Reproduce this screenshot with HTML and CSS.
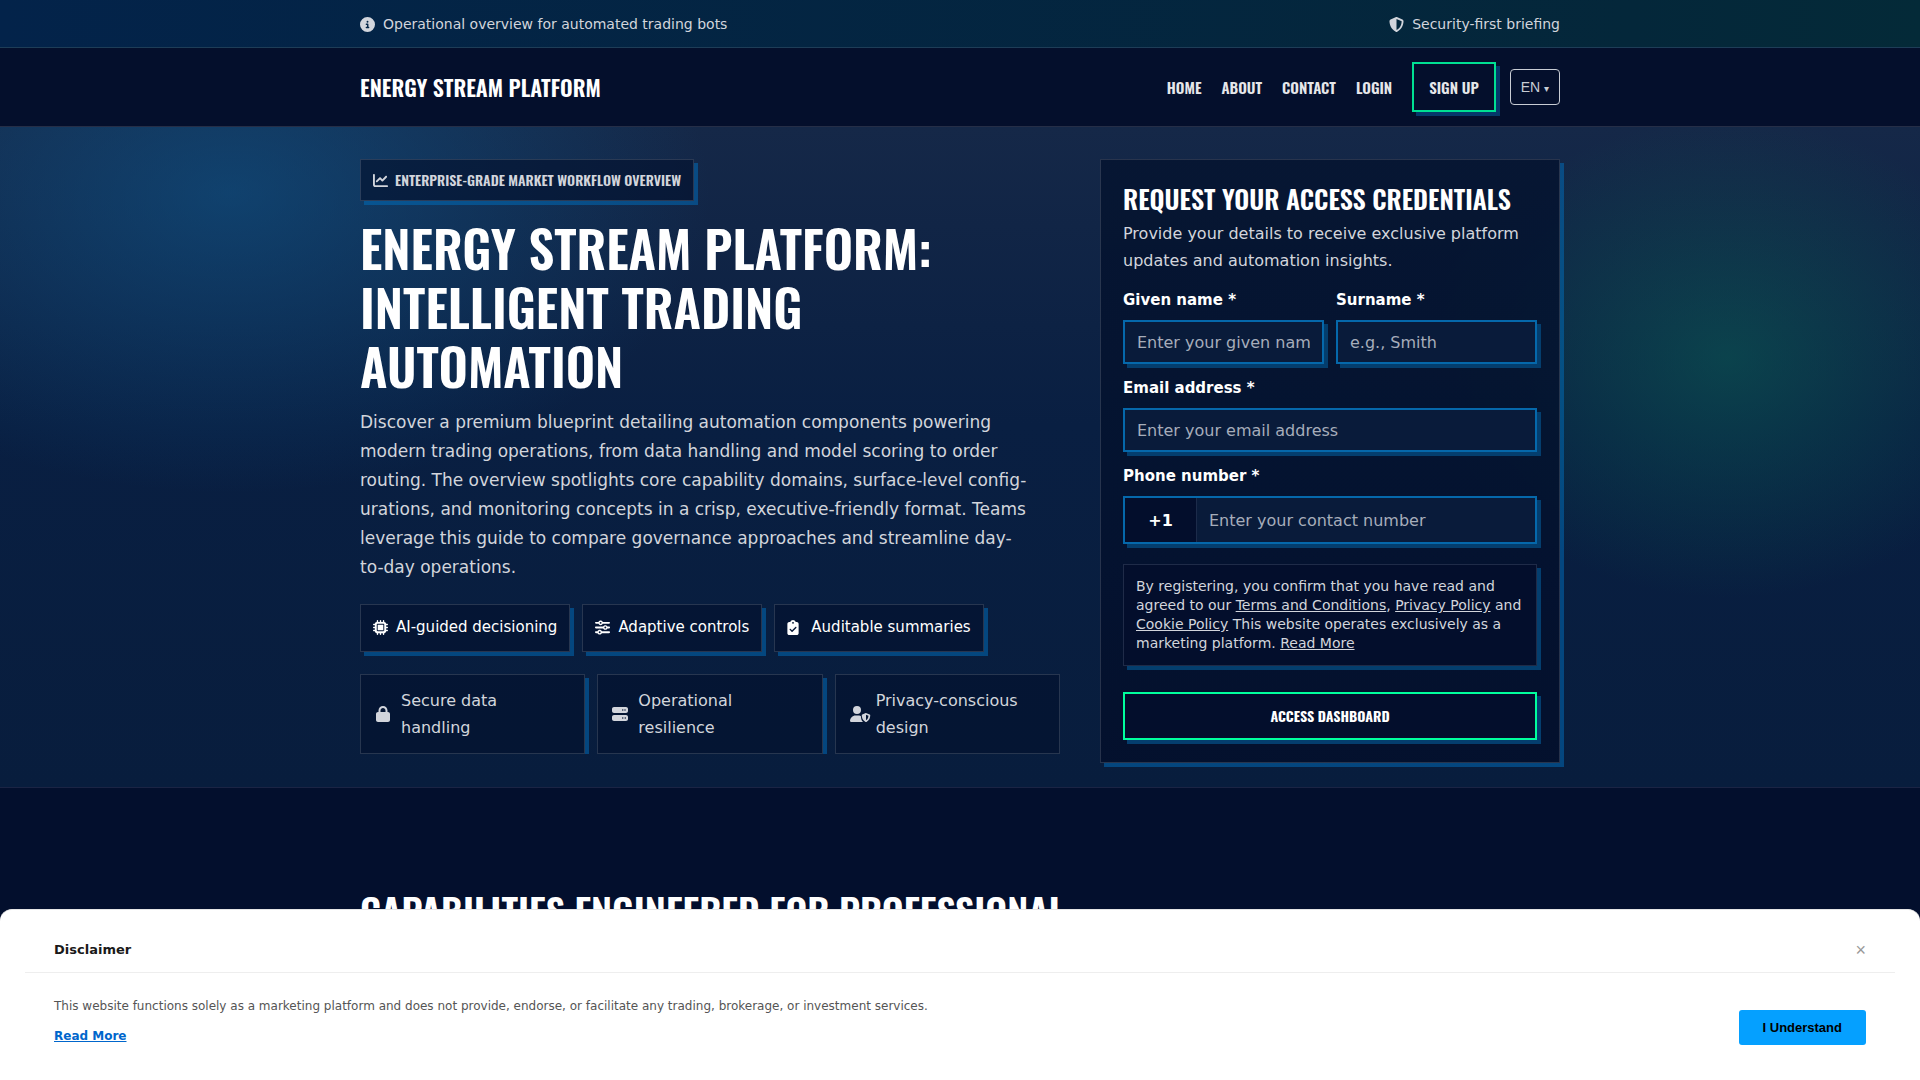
FILE: index.html
```html
<!DOCTYPE html>
<html lang="en">
<head>
    <meta charset="UTF-8">
    <meta name="viewport" content="width=device-width, initial-scale=1.0">
    <title>Energy Stream Platform</title>
    <link rel="stylesheet" href="styles.css">
</head>
<body>
    <div class="topbar">
        <div class="container topbar-inner">
            <span class="topbar-item">
                <svg class="icon" viewBox="0 0 512 512" aria-hidden="true"><path d="M256 512A256 256 0 1 0 256 0a256 256 0 1 0 0 512zM216 336h24V272H216c-13 0-24-11-24-24s11-24 24-24h48c13 0 24 11 24 24v88h8c13 0 24 11 24 24s-11 24-24 24H216c-13 0-24-11-24-24s11-24 24-24zm40-208a32 32 0 1 1 0 64 32 32 0 1 1 0-64z"/></svg>
                Operational overview for automated trading bots
            </span>
            <span class="topbar-item">
                <svg class="icon" viewBox="0 0 512 512" aria-hidden="true"><path d="M256 0c4.600 0 9.200 1 13.400 2.900L457.700 82.800c22 9.300 38.400 31 38.300 57.200c-.5 99.200-41.300 280.700-213.600 363.200c-16.700 8-36.100 8-52.800 0C57.300 420.700 16.500 239.200 16 140c-.1-26.200 16.300-47.900 38.300-57.200L242.700 2.900C246.800 1 251.400 0 256 0zm0 66.800V444.800C394 378 431.100 230.100 432 141.400L256 66.800z"/></svg>
                Security-first briefing
            </span>
        </div>
    </div>

    <header class="header">
        <div class="container header-inner">
            <a class="brand" href="#">Energy Stream Platform</a>
            <nav class="nav">
                <a href="#">Home</a>
                <a href="#">About</a>
                <a href="#">Contact</a>
                <a href="#">Login</a>
                <a class="nav-cta" href="#signup">Sign up</a>
                <button class="lang" type="button">EN <span class="lang-arrow">▾</span></button>
            </nav>
        </div>
    </header>

    <main>
        <section class="hero">
            <div class="container hero-grid">
                <div class="hero-copy">
                    <div class="badge">
                        <svg class="icon" viewBox="0 0 512 512" aria-hidden="true"><path d="M64 64c0-17.700-14.300-32-32-32S0 46.300 0 64V400c0 44.200 35.800 80 80 80H480c17.700 0 32-14.300 32-32s-14.300-32-32-32H80c-8.800 0-16-7.200-16-16V64zm406.600 86.600c12.500-12.500 12.500-32.800 0-45.300s-32.800-12.500-45.300 0L320 210.700l-57.400-57.400c-12.500-12.500-32.800-12.500-45.300 0l-112 112c-12.500 12.500-12.500 32.800 0 45.300s32.800 12.500 45.300 0L240 221.300l57.400 57.400c12.500 12.500 32.800 12.500 45.300 0l128-128z"/></svg>
                        Enterprise-grade market workflow overview
                    </div>
                    <h1>Energy Stream Platform: Intelligent Trading Automation</h1>
                    <p class="lead">Discover a premium blueprint detailing automation components powering modern trading operations, from data handling and model scoring to order routing. The overview spotlights core capability domains, surface-level config&shy;urations, and monitoring concepts in a crisp, executive-friendly format. Teams leverage this guide to compare governance approaches and streamline day-to-day operations.</p>

                    <div class="chips">
                        <div class="chip">
                            <svg class="icon" viewBox="0 0 512 512" aria-hidden="true"><path fill-rule="evenodd" d="M176 24c0-13.300-10.700-24-24-24s-24 10.700-24 24v40c-35.300 0-64 28.700-64 64H24c-13.300 0-24 10.700-24 24s10.700 24 24 24h40v56H24c-13.300 0-24 10.700-24 24s10.700 24 24 24h40v56H24c-13.300 0-24 10.700-24 24s10.700 24 24 24h40c0 35.300 28.700 64 64 64v40c0 13.300 10.700 24 24 24s24-10.700 24-24v-40h56v40c0 13.300 10.700 24 24 24s24-10.700 24-24v-40h56v40c0 13.300 10.700 24 24 24s24-10.700 24-24v-40c35.300 0 64-28.700 64-64h40c13.300 0 24-10.700 24-24s-10.700-24-24-24h-40v-56h40c13.300 0 24-10.700 24-24s-10.700-24-24-24h-40v-56h40c13.300 0 24-10.700 24-24s-10.700-24-24-24h-40c0-35.300-28.700-64-64-64V24c0-13.300-10.700-24-24-24s-24 10.700-24 24v40h-56V24c0-13.300-10.700-24-24-24s-24 10.700-24 24v40h-56V24zM160 128H352c17.700 0 32 14.300 32 32V352c0 17.700-14.300 32-32 32H160c-17.700 0-32-14.300-32-32V160c0-17.700 14.300-32 32-32zm192 32H160V352H352V160z"/></svg>
                            AI-guided decisioning
                        </div>
                        <div class="chip">
                            <svg class="icon" viewBox="0 0 512 512" aria-hidden="true"><path d="M0 416c0 17.700 14.300 32 32 32h54.700c12.300 28.300 40.500 48 73.300 48s61-19.700 73.300-48H480c17.700 0 32-14.300 32-32s-14.300-32-32-32H233.300c-12.300-28.300-40.500-48-73.300-48s-61 19.700-73.300 48H32c-17.700 0-32 14.300-32 32zm128 0a32 32 0 1 1 64 0 32 32 0 1 1-64 0zM320 256a32 32 0 1 1 64 0 32 32 0 1 1-64 0zm32-80c-32.800 0-61 19.700-73.300 48H32c-17.700 0-32 14.300-32 32s14.300 32 32 32h246.700c12.300 28.300 40.500 48 73.300 48s61-19.700 73.300-48H480c17.700 0 32-14.300 32-32s-14.300-32-32-32h-54.700c-12.300-28.300-40.500-48-73.300-48zM192 128a32 32 0 1 1 0-64 32 32 0 1 1 0 64zm73.300-64C253 35.700 224.800 16 192 16s-61 19.700-73.300 48H32C14.300 64 0 78.300 0 96s14.300 32 32 32h86.700c12.300 28.300 40.500 48 73.300 48s61-19.700 73.300-48H480c17.700 0 32-14.300 32-32s-14.300-32-32-32H265.300z"/></svg>
                            Adaptive controls
                        </div>
                        <div class="chip">
                            <svg class="icon icon-narrow" viewBox="0 0 384 512" aria-hidden="true"><path d="M192 0c-41.800 0-77.400 26.700-90.500 64H64C28.700 64 0 92.700 0 128V448c0 35.300 28.700 64 64 64H320c35.300 0 64-28.700 64-64V128c0-35.300-28.700-64-64-64H282.500C269.400 26.700 233.800 0 192 0zm0 64a32 32 0 1 1 0 64 32 32 0 1 1 0-64zM305 273L177 401c-9.400 9.400-24.600 9.400-33.900 0L79 337c-9.400-9.400-9.400-24.600 0-33.900s24.600-9.400 33.900 0l47 47L271 239c9.400-9.400 24.600-9.400 33.900 0s9.400 24.600 0 33.900z"/></svg>
                            Auditable summaries
                        </div>
                    </div>

                    <div class="assurances">
                        <div class="assurance">
                            <svg class="icon-fixed" viewBox="-32 0 512 512" aria-hidden="true"><path d="M144 144v48H304V144c0-44.200-35.800-80-80-80s-80 35.800-80 80zM80 192V144C80 64.500 144.500 0 224 0s144 64.500 144 144v48h16c35.300 0 64 28.700 64 64V448c0 35.300-28.700 64-64 64H64c-35.300 0-64-28.700-64-64V256c0-35.300 28.700-64 64-64H80z"/></svg>
                            <span>Secure data handling</span>
                        </div>
                        <div class="assurance">
                            <svg class="icon-fixed" viewBox="0 0 512 512" aria-hidden="true"><path d="M64 32C28.700 32 0 60.700 0 96v64c0 35.300 28.700 64 64 64H448c35.300 0 64-28.700 64-64V96c0-35.300-28.700-64-64-64H64zm280 72a24 24 0 1 1 0 48 24 24 0 1 1 0-48zm48 24a24 24 0 1 1 48 0 24 24 0 1 1-48 0zM64 288c-35.300 0-64 28.700-64 64v64c0 35.300 28.700 64 64 64H448c35.300 0 64-28.700 64-64V352c0-35.300-28.700-64-64-64H64zm280 72a24 24 0 1 1 0 48 24 24 0 1 1 0-48zm56 24a24 24 0 1 1 48 0 24 24 0 1 1-48 0z"/></svg>
                            <span>Operational resilience</span>
                        </div>
                        <div class="assurance">
                            <svg class="icon-fixed" viewBox="0 0 512 512" aria-hidden="true"><path d="M224 256A128 128 0 1 0 224 0a128 128 0 1 0 0 256zM178.300 304C79.800 304 0 383.800 0 482.300C0 498.700 13.300 512 29.700 512H418.300c1.800 0 3.500-.2 5.300-.5C378 480 352 422 349 325c-16-14-35-21-55-21H178.300zM512 224c-3 0-6 .6-8 1.500l-110 44c-11 4.400-18 15-18 26.500c0 76 30 166 121 214c9 4 21 4 30 0c91-48 121-138 121-214c0-11.500-7-22-18-26.500l-120-44c-2-.9-5-1.500-8-1.500zm0 56l78 31c-4 60-27 117-78 147V280z"/></svg>
                            <span>Privacy-conscious design</span>
                        </div>
                    </div>
                </div>

                <form class="card" id="signup">
                    <h2>Request your access credentials</h2>
                    <p class="card-text">Provide your details to receive exclusive platform updates and automation insights.</p>
                    <div class="fields">
                        <div class="field">
                            <label for="first-name">Given name *</label>
                            <input id="first-name" type="text" placeholder="Enter your given name">
                        </div>
                        <div class="field">
                            <label for="last-name">Surname *</label>
                            <input id="last-name" type="text" placeholder="e.g., Smith">
                        </div>
                        <div class="field field-wide">
                            <label for="email">Email address *</label>
                            <input id="email" type="email" placeholder="Enter your email address">
                        </div>
                        <div class="field field-wide">
                            <label for="phone">Phone number *</label>
                            <div class="phone">
                                <span class="phone-code">+1</span>
                                <input id="phone" type="tel" placeholder="Enter your contact number">
                            </div>
                        </div>
                    </div>
                    <p class="consent">By registering, you confirm that you have read and agreed to our <a href="#">Terms and Conditions</a>, <a href="#">Privacy Policy</a> and <a href="#">Cookie Policy</a> This website operates exclusively as a marketing platform. <a href="#">Read More</a></p>
                    <button class="submit" type="submit">Access dashboard</button>
                </form>
            </div>
        </section>

        <section class="capabilities">
            <div class="container">
                <h2>Capabilities engineered for professional</h2>
            </div>
        </section>
    </main>

    <div class="disclaimer" id="disclaimer">
        <div class="disclaimer-head">
            <strong>Disclaimer</strong>
            <button class="close" type="button" aria-label="Close">×</button>
        </div>
        <div class="disclaimer-body">
            <div>
                <p>This website functions solely as a marketing platform and does not provide, endorse, or facilitate any trading, brokerage, or investment services.</p>
                <a href="#">Read More</a>
            </div>
            <button class="accept" type="button">I Understand</button>
        </div>
    </div>

    <script>
        const disclaimer = document.getElementById('disclaimer');
        function hideDisclaimer() {
            disclaimer.hidden = true;
        }
        disclaimer.querySelector('.close').addEventListener('click', hideDisclaimer);
        disclaimer.querySelector('.accept').addEventListener('click', hideDisclaimer);
    </script>
</body>
</html>
```

FILE: styles.css
```css
:root {
    --navy: #030f2d;
    --text: #ffffff;
    --muted: #d2d5dc;
    --line: rgba(255, 255, 255, 0.14);
    --panel: rgba(3, 17, 46, 0.65);
    --blue: #0568ab;
    --green: #00ff9d;
    --shadow: 4px 4px 0 rgba(0, 112, 192, 0.5);
    --heading: Oswald, "Liberation Sans Narrow", "DejaVu Sans Condensed", sans-serif;
    --body: "DejaVu Sans", sans-serif;
}
* {
    box-sizing: border-box;
}
body {
    margin: 0;
    background: var(--navy);
    color: var(--text);
    font-family: var(--body);
    font-size: 16px;
    line-height: 27px;
}
h1, h2, p {
    margin: 0;
}
a {
    color: inherit;
    text-decoration: none;
}
button {
    cursor: pointer;
}
.container {
    max-width: 1200px;
    margin: 0 auto;
}
.icon {
    width: 15px;
    height: 15px;
    flex: none;
    fill: currentColor;
}
.icon-narrow {
    width: 12px;
    margin-right: 4px;
}
.icon-fixed {
    width: 16px;
    height: 16px;
    flex: none;
    fill: currentColor;
    overflow: visible;
}

/* top bar and header */
.topbar {
    background: linear-gradient(90deg, #03234a, #04273a 85%, #042a38);
    border-bottom: 1px solid #1e3d57;
    color: var(--muted);
    font-size: 14px;
    line-height: 26px;
}
.topbar-inner {
    display: flex;
    justify-content: space-between;
    padding: 11px 0 10px;
}
.topbar-item {
    display: flex;
    align-items: center;
    gap: 8px;
}
.header {
    background: #040f2c;
    border-bottom: 1px solid #252e47;
}
.header-inner {
    display: flex;
    justify-content: space-between;
    align-items: center;
    padding: 14px 0;
}
.brand {
    font-family: var(--heading);
    font-size: 22px;
    font-weight: 600;
    text-transform: uppercase;
}
.nav {
    display: flex;
    align-items: center;
    gap: 20px;
    color: #e6e7ea;
    font-family: var(--heading);
    font-size: 15px;
    font-weight: 600;
    text-transform: uppercase;
}
.nav-cta {
    padding: 10px 15px;
    line-height: 26px;
    border: 2px solid #00e092;
    box-shadow: 4px 4px 0 #05386a;
}
.lang {
    height: 36px;
    padding: 0 10px;
    margin-left: -6px;
    background: transparent;
    border: 1px solid #c8ccd4;
    border-radius: 4px;
    color: #c8ccd4;
    font-family: "Liberation Sans", sans-serif;
    font-size: 14px;
}
.lang-arrow {
    font-size: 10px;
}

/* hero */
.hero {
    padding: 32px 0 24px;
    border-bottom: 1px solid #1b2444;
    background:
        radial-gradient(480px 300px at 12% 10%, rgba(14, 88, 142, 0.55), transparent),
        radial-gradient(300px 240px at 90% 35%, rgba(10, 100, 86, 0.5), transparent),
        linear-gradient(180deg, #152848, #091f42 45%, #081d3d);
}
.hero-grid {
    display: grid;
    grid-template-columns: minmax(0, 1fr) 460px;
    gap: 40px;
    align-items: start;
}
.badge {
    display: inline-flex;
    align-items: center;
    gap: 7px;
    padding: 8px 12px;
    background: var(--panel);
    border: 1px solid var(--line);
    box-shadow: var(--shadow);
    color: var(--muted);
    font-family: var(--heading);
    font-size: 14px;
    font-weight: 600;
    line-height: 24px;
    text-transform: uppercase;
    vertical-align: top;
}
h1 {
    margin: 17px 0 13px;
    font-family: var(--heading);
    font-size: 51px;
    font-weight: 600;
    line-height: 59px;
    text-transform: uppercase;
}
.lead {
    max-width: 672px;
    color: var(--muted);
    font-size: 17px;
    line-height: 29px;
}
.chips {
    display: flex;
    flex-wrap: wrap;
    gap: 12px;
    margin: 22px 0;
}
.chip {
    display: flex;
    align-items: center;
    gap: 8px;
    padding: 9px 12px 11px;
    background: var(--panel);
    border: 1px solid var(--line);
    box-shadow: var(--shadow);
    font-size: 15px;
    line-height: 26px;
}
.assurances {
    display: grid;
    grid-template-columns: repeat(3, 1fr);
    gap: 12px;
    overflow: hidden;
}
.assurance {
    display: flex;
    align-items: center;
    gap: 10px;
    padding: 12px 14px;
    background: var(--panel);
    border: 1px solid var(--line);
    box-shadow: var(--shadow);
    color: var(--muted);
}

/* sign up card */
.card {
    padding: 22px;
    background: linear-gradient(180deg, rgba(4, 19, 47, 0.85), rgba(3, 15, 43, 0.85));
    border: 1px solid var(--line);
    box-shadow: var(--shadow);
}
.card h2 {
    margin-bottom: 4px;
    font-family: var(--heading);
    font-size: 26px;
    font-weight: 600;
    line-height: 34px;
    text-transform: uppercase;
}
.card-text {
    color: var(--muted);
}
.fields {
    display: grid;
    grid-template-columns: 1fr 1fr;
    gap: 11px 12px;
    margin-top: 13px;
}
.field {
    display: grid;
    gap: 7px;
}
.field-wide {
    grid-column: 1 / -1;
}
label {
    font-size: 15px;
    font-weight: 700;
    line-height: 26px;
}
input {
    width: 100%;
    height: 44px;
    padding: 0 12px;
    background: #091b3a;
    border: 2px solid var(--blue);
    border-radius: 0;
    box-shadow: 4px 4px 0 #043e6e;
    color: var(--text);
    font-family: var(--body);
    font-size: 16px;
}
input::placeholder {
    color: #a6adba;
    opacity: 1;
}
.phone {
    display: flex;
    height: 48px;
    border: 2px solid var(--blue);
    box-shadow: 4px 4px 0 #043e6e;
}
.phone-code {
    display: flex;
    align-items: center;
    justify-content: center;
    width: 72px;
    background: #030e2c;
    border-right: 1px solid #1c2b4a;
    font-weight: 700;
}
.phone input {
    flex: 1;
    width: auto;
    height: auto;
    border: 0;
    box-shadow: none;
}
.consent {
    margin: 20px 0 26px;
    padding: 12px;
    background: #030e2c;
    border: 1px solid #1f2b48;
    box-shadow: 4px 4px 0 #043e6e;
    color: var(--muted);
    font-size: 14px;
    line-height: 19px;
}
.consent a {
    text-decoration: underline;
}
.submit {
    display: block;
    width: 100%;
    height: 48px;
    padding: 0 0 2px;
    background: #030e2c;
    border: 2px solid var(--green);
    box-shadow: 4px 4px 0 #043e6e;
    color: var(--text);
    font-family: var(--heading);
    font-size: 14px;
    font-weight: 700;
    text-transform: uppercase;
}

.capabilities {
    padding: 99px 0 80px;
}
.capabilities h2 {
    font-family: var(--heading);
    font-size: 38px;
    font-weight: 600;
    line-height: 46px;
    text-transform: uppercase;
}

/* disclaimer bar */
.disclaimer {
    position: fixed;
    left: 0;
    right: 0;
    bottom: 0;
    padding: 24px 25px;
    background: #fff;
    border-top: 1px solid #e6e6e6;
    border-radius: 12px 12px 0 0;
    color: #555;
    font-size: 12px;
    line-height: 18px;
}
.disclaimer[hidden] {
    display: none;
}
.disclaimer-head {
    display: flex;
    justify-content: space-between;
    align-items: center;
    padding: 6px 29px 12px;
    border-bottom: 1px solid #eee;
    color: #1a1a1a;
    font-size: 13px;
    line-height: 20px;
}
.close {
    padding: 0;
    background: none;
    border: 0;
    color: #999;
    font-family: "Liberation Sans", sans-serif;
    font-size: 18px;
    line-height: 20px;
}
.disclaimer-body {
    display: flex;
    justify-content: space-between;
    align-items: flex-end;
    padding: 24px 29px 11px;
}
.disclaimer-body a {
    display: inline-block;
    margin-top: 12px;
    color: #06c;
    font-weight: 700;
    text-decoration: underline;
}
.accept {
    height: 35px;
    padding: 0 24px;
    background: #05a0ff;
    border: 0;
    border-radius: 3px;
    color: #000;
    font-family: "Liberation Sans", sans-serif;
    font-size: 13px;
    font-weight: 700;
}
```
